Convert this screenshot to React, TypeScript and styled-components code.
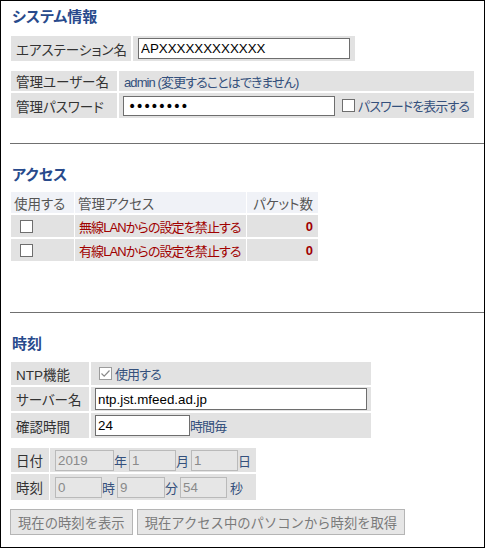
import React from 'react';
import styled, { createGlobalStyle, css } from 'styled-components';

const GlobalStyle = createGlobalStyle`
  html, body {
    margin: 0;
    padding: 0;
    background: #fff;
  }
  body {
    font-family: "Liberation Sans", "Noto Sans CJK JP", sans-serif;
    font-size: 13.5px;
    color: #333;
    font-feature-settings: "palt";
  }
  * {
    box-sizing: border-box;
  }
`;

const uiFont = `"Liberation Sans", "Noto Sans CJK JP", sans-serif`;

const Page = styled.div`
  width: 485px;
  height: 548px;
  border: 1px solid #000;
  padding: 6px 0 0 10px;
  overflow: hidden;
`;

const SectionTitle = styled.h2<{ $top?: number }>`
  margin: ${p => p.$top ?? 0}px 0 0 1px;
  height: 20px;
  line-height: 20px;
  font-size: 15px;
  font-weight: bold;
  color: #284a8c;
`;

const Rule = styled.hr<{ $top: number }>`
  margin: ${p => p.$top}px 0 0 -1px;
  height: 0;
  border: 0;
  border-top: 1px solid #707070;
`;

const Grid = styled.div<{ $cols: string; $rows: string; $top: number; $colGap?: number }>`
  display: grid;
  grid-template-columns: ${p => p.$cols};
  grid-template-rows: ${p => p.$rows};
  gap: 2px ${p => p.$colGap ?? 2}px;
  width: max-content;
  margin-top: ${p => p.$top}px;
`;

const Cell = styled.div<{ $head?: boolean; $right?: boolean; $pad?: number }>`
  display: flex;
  align-items: center;
  justify-content: ${p => (p.$right ? 'flex-end' : 'flex-start')};
  padding: 0 ${p => (p.$right ? 5 : 0)}px 0 ${p => p.$pad ?? 5}px;
  background: #e2e2e2;
  white-space: nowrap;
  ${p =>
    p.$head &&
    css`
      background: #f0f2f7;
      color: #555;
      padding-left: 3px;
    `}
`;

const Note = styled.span`
  color: #34507c;
  font-size: 13px;
  letter-spacing: -0.9px;
`;

const Alert = styled.span<{ $bold?: boolean }>`
  color: #a00000;
  font-size: 13px;
  letter-spacing: ${p => (p.$bold ? 0 : -0.9)}px;
  font-weight: ${p => (p.$bold ? 'bold' : 'normal')};
`;

const TextInput = styled.input<{ $w: number; $h?: number }>`
  width: ${p => p.$w}px;
  height: ${p => p.$h ?? 21}px;
  margin: 0;
  padding: 0 2px;
  border: 1px solid #6e6e6e;
  background: #fff;
  color: #000;
  font: 13.33px ${uiFont};
  outline: none;
`;

const PasswordInput = styled(TextInput)`
  padding: 0 4px;
  font: 14px "DejaVu Sans", sans-serif;
  letter-spacing: -0.8px;
`;

const DimInput = styled.input<{ $w: number }>`
  width: ${p => p.$w}px;
  height: 21px;
  margin: 0;
  padding: 0 2px;
  border: 1px solid #bababa;
  background: #e6e6e6;
  color: #8a8a8a;
  font: 13.33px ${uiFont};
  outline: none;
`;

const Unit = styled.span<{ $after?: number }>`
  color: #34507c;
  font-size: 13px;
  margin-right: ${p => p.$after ?? 2}px;
`;

const Box = styled.span<{ $dim?: boolean; $gap?: number }>`
  display: inline-flex;
  align-items: center;
  justify-content: center;
  flex: none;
  width: 13px;
  height: 13px;
  margin-right: ${p => p.$gap ?? 0}px;
  border: 1px solid ${p => (p.$dim ? '#9c9c9c' : '#6e6e6e')};
  background: #fff;
`;

const CheckBox: React.FC<{ checked?: boolean; dim?: boolean; gap?: number }> = ({ checked, dim, gap }) => (
  <Box role="checkbox" aria-checked={!!checked} $dim={dim} $gap={gap}>
    {checked && (
      <svg width="11" height="11" viewBox="0 0 11 11">
        <path d="M1.5 5.5 L4.2 8.2 L9.5 2.5" fill="none" stroke="#8a8a8a" strokeWidth="1.2" />
      </svg>
    )}
  </Box>
);

const ButtonRow = styled.div`
  display: flex;
  gap: 4px;
  margin: 9px 0 0 -1px;
`;

const ActionButton = styled.button`
  height: 26px;
  margin: 0;
  padding: 0 7px;
  border: 1px solid #b5b5b5;
  background: #e6e6e6;
  color: #7a7a7a;
  font: 13.33px ${uiFont};
  font-feature-settings: normal;
  white-space: nowrap;
`;

const accessRows = [
  { label: '無線LANからの設定を禁止する', count: 0 },
  { label: '有線LANからの設定を禁止する', count: 0 },
];

export default function App() {
  return (
    <>
      <GlobalStyle />
      <Page>
        <SectionTitle>システム情報</SectionTitle>
        <Grid $cols="120px 222px" $rows="25px" $top={9}>
          <Cell>エアステーション名</Cell>
          <Cell>
            <TextInput $w={212} defaultValue="APXXXXXXXXXXXX" />
          </Cell>
        </Grid>
        <Grid $cols="106px 355px" $rows="20px 25px" $top={10}>
          <Cell>管理ユーザー名</Cell>
          <Cell>
            <Note>admin (変更することはできません)</Note>
          </Cell>
          <Cell>管理パスワード</Cell>
          <Cell $pad={4}>
            <PasswordInput $w={212} $h={20} type="password" defaultValue="password" />
            <Box style={{ marginLeft: 7 }} />
            <Note style={{ marginLeft: 3 }}>パスワードを表示する</Note>
          </Cell>
        </Grid>

        <Rule $top={25} />

        <SectionTitle $top={21}>アクセス</SectionTitle>
        <Grid $cols="63px 171px 71px" $rows="21px 22px 22px" $top={7} $colGap={1}>
          <Cell $head>使用する</Cell>
          <Cell $head>管理アクセス</Cell>
          <Cell $head $right>パケット数</Cell>
          {accessRows.map(row => (
            <React.Fragment key={row.label}>
              <Cell $pad={9}>
                <CheckBox />
              </Cell>
              <Cell $pad={4}>
                <Alert>{row.label}</Alert>
              </Cell>
              <Cell $right>
                <Alert $bold>{row.count}</Alert>
              </Cell>
            </React.Fragment>
          ))}
        </Grid>

        <Rule $top={51} />

        <SectionTitle $top={21}>時刻</SectionTitle>
        <Grid $cols="78px 280px" $rows="23px 24px 25px" $top={8}>
          <Cell>NTP機能</Cell>
          <Cell $pad={8}>
            <CheckBox checked dim gap={3} />
            <Note>使用する</Note>
          </Cell>
          <Cell>サーバー名</Cell>
          <Cell $pad={4}>
            <TextInput $w={272} $h={22} defaultValue="ntp.jst.mfeed.ad.jp" />
          </Cell>
          <Cell>確認時間</Cell>
          <Cell $pad={4}>
            <TextInput $w={95} defaultValue="24" />
            <Note>時間毎</Note>
          </Cell>
        </Grid>

        <Grid $cols="38px 206px" $rows="24px 26px" $top={10} $colGap={1}>
          <Cell>日付</Cell>
          <Cell>
            <DimInput $w={59} disabled defaultValue="2019" />
            <Unit>年</Unit>
            <DimInput $w={47} disabled defaultValue="1" />
            <Unit>月</Unit>
            <DimInput $w={47} disabled defaultValue="1" />
            <Unit>日</Unit>
          </Cell>
          <Cell>時刻</Cell>
          <Cell>
            <DimInput $w={47} disabled defaultValue="0" />
            <Unit>時</Unit>
            <DimInput $w={48} disabled defaultValue="9" />
            <Unit>分</Unit>
            <DimInput $w={47} disabled defaultValue="54" />
            <Unit style={{ marginLeft: 3 }}>秒</Unit>
          </Cell>
        </Grid>

        <ButtonRow>
          <ActionButton disabled>現在の時刻を表示</ActionButton>
          <ActionButton disabled>現在アクセス中のパソコンから時刻を取得</ActionButton>
        </ButtonRow>
      </Page>
    </>
  );
}
